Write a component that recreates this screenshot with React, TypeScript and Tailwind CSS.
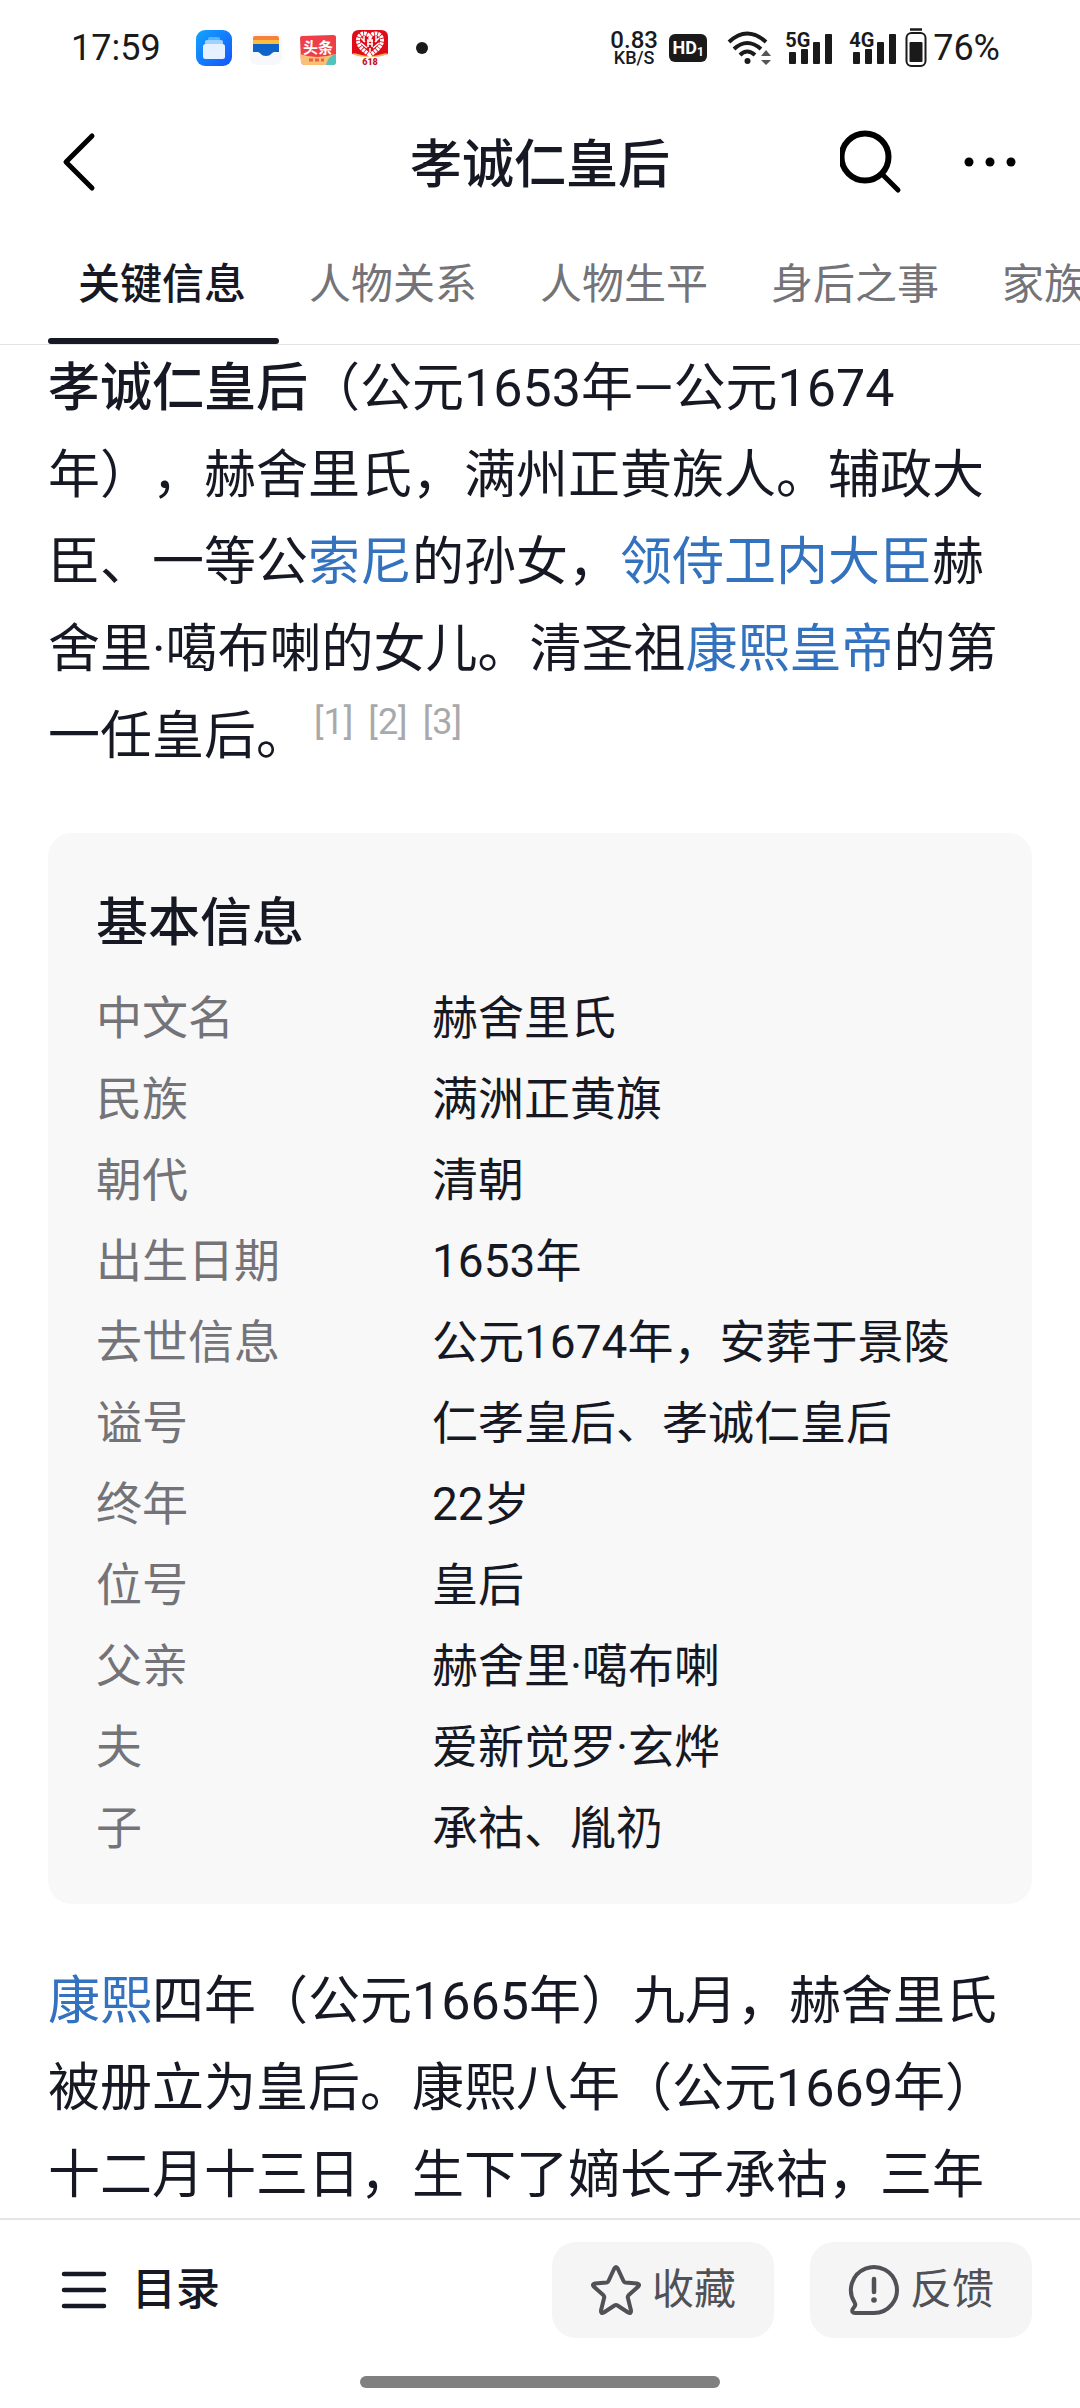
import { useState } from "react";

const tabs = ["关键信息", "人物关系", "人物生平", "身后之事", "家族成员"];

const info = [
  { label: "中文名", value: "赫舍里氏" },
  { label: "民族", value: "满洲正黄旗" },
  { label: "朝代", value: "清朝" },
  { label: "出生日期", value: "1653年" },
  { label: "去世信息", value: "公元1674年，安葬于景陵" },
  { label: "谥号", value: "仁孝皇后、孝诚仁皇后" },
  { label: "终年", value: "22岁" },
  { label: "位号", value: "皇后" },
  { label: "父亲", value: "赫舍里·噶布喇" },
  { label: "夫", value: "爱新觉罗·玄烨" },
  { label: "子", value: "承祜、胤礽" },
];

function WikiLink({ children }: { children: string }) {
  return (
    <a href="#" className="text-[#3372be]">
      {children}
    </a>
  );
}

function Signal({ label }: { label: string }) {
  return (
    <div className="relative h-9 w-12">
      <span className="absolute left-0 top-0 text-xl leading-5 font-bold">{label}</span>
      <svg viewBox="0 0 48 36" className="h-9 w-12" fill="currentColor">
        <rect x="4" y="22" width="7" height="12" rx="1" />
        <rect x="16" y="19" width="7" height="15" rx="1" />
        <rect x="28" y="12" width="7" height="22" rx="1" />
        <rect x="40" y="4" width="7" height="30" rx="1" />
      </svg>
    </div>
  );
}

function AppIcons() {
  return (
    <div className="flex items-center gap-4">
      <svg viewBox="0 0 36 36" className="size-9">
        <defs>
          <linearGradient id="files" x1="0" y1="0" x2="1" y2="1">
            <stop offset="0" stopColor="#12a4ff" />
            <stop offset="1" stopColor="#1554fb" />
          </linearGradient>
        </defs>
        <rect width="36" height="36" rx="9" fill="url(#files)" />
        <rect x="12" y="7" width="12" height="4" rx="1.5" fill="#55b4ff" />
        <rect x="9" y="10" width="18" height="5" rx="2" fill="#9fd2ff" />
        <rect x="7" y="14" width="22" height="15" rx="2.5" fill="#e6f1ff" />
      </svg>
      <svg viewBox="0 0 36 36" className="size-9">
        <rect x="2" y="3" width="32" height="32" rx="8" fill="#f6f8fc" />
        <path d="M5 8a2 2 0 0 1 2-2h22a2 2 0 0 1 2 2v3H5z" fill="#f5813c" />
        <path d="M5 10h26v5H5z" fill="#fbbf3f" />
        <path d="M5 14h26v8h-5c-2 0-3 4-8 4s-6-4-8-4H5z" fill="#0d63c8" />
      </svg>
      <svg viewBox="0 0 36 36" className="size-9">
        <path d="M0 8q0-2 2-2l31-1q3 0 3 2v24q0 4-4 4H5q-3 0-4-3z" fill="#ee3f49" />
        <path d="M0 24q16 6 36 0v8q0 3-3 3H5q-3 0-4-3z" fill="#fbc078" />
        <path d="M36 24v8q0 3-3 3h-7q2-9 10-11z" fill="#4fc4bd" />
        <text x="3" y="23" fontSize="15" fontWeight="700" fill="#fff">
          头条
        </text>
        <path d="M9 30h4M15 30h4M21 30h3" stroke="#e8623a" strokeWidth="3" />
      </svg>
      <svg viewBox="0 0 36 36" className="size-9">
        <path d="M0 7q0-7 7-7h22q7 0 7 7v17q-8 2-18 2T0 24z" fill="#e00b18" />
        <path d="M0 23q8 1 12 3h12q4-2 12-3l-5 3q-13 2-26 0z" fill="#f8b650" />
        <path
          d="M18 25C9 19 6 15 6 10c0-7 9-9 12-3 3-6 12-4 12 3 0 5-3 9-12 15z"
          fill="none"
          stroke="#fff"
          strokeWidth="4"
          strokeDasharray="2.500 .8"
        />
        <path
          d="M15 11h6M15 14h6M16 9v8M20 9v8M9 8l4 4M9 13l6 5M27 8l-4 4M27 13l-6 5M12 6v6M24 6v6M18 18v4"
          stroke="#fff"
          strokeWidth="1.500"
        />
        <text x="18" y="35" fontSize="9" fontWeight="900" textAnchor="middle" fill="#c8121c">
          618
        </text>
      </svg>
    </div>
  );
}

function StatusBar() {
  return (
    <div className="flex h-24 items-center justify-between pl-[71px] pr-20 text-[#1a1a1a]">
      <div className="flex items-center">
        <span className="w-[125px] text-4xl leading-9">17:59</span>
        <AppIcons />
        <span className="ml-7 size-3 rounded-full bg-current" />
      </div>
      <div className="flex items-center">
        <div className="flex w-[50px] flex-col items-center font-medium">
          <span className="text-2xl leading-5">0.83</span>
          <span className="text-lg leading-4">KB/S</span>
        </div>
        <span className="ml-2.5 flex h-7 w-[38px] items-end justify-center rounded-md bg-current">
          <span className="text-lg leading-7 font-bold text-white">HD</span>
          <span className="text-xs leading-5 font-bold text-white">1</span>
        </span>
        <svg viewBox="0 0 48 36" className="ml-5 h-9 w-12" fill="none" stroke="currentColor">
          <path d="M2 12Q20-5 39 12M7 19Q20 7 34 19M13 25Q20 18 28 25" strokeWidth="4" />
          <circle cx="20.5" cy="31" r="3" fill="currentColor" stroke="none" />
          <path d="M34 26l5-6 5 6zM34 30h10l-5 5z" fill="#555" stroke="none" />
        </svg>
        <div className="ml-2.5 flex gap-4">
          <Signal label="5G" />
          <Signal label="4G" />
        </div>
        <svg viewBox="0 0 22 40" className="ml-2 h-10 w-[22px]" fill="none" stroke="currentColor">
          <path d="M5 1.5h12" strokeWidth="2.5" />
          <rect x="1.5" y="5" width="19" height="33" rx="5" strokeWidth="2" />
          <rect x="4.5" y="14" width="13" height="20" rx="1" fill="currentColor" stroke="none" />
        </svg>
        <span className="ml-1.5 text-4xl leading-9">76%</span>
      </div>
    </div>
  );
}

function Header() {
  return (
    <header className="grid h-[132px] grid-cols-3 items-center px-[60px]">
      <button type="button" aria-label="返回" className="justify-self-start">
        <svg viewBox="0 0 40 60" className="h-[60px] w-10" fill="none" stroke="#000" strokeWidth="5" strokeLinecap="round" strokeLinejoin="round">
          <path d="M32 4L6 30l26 26" />
        </svg>
      </button>
      <h1 className="pt-2 text-center text-[52px] leading-[60px] font-medium whitespace-nowrap">孝诚仁皇后</h1>
      <div className="flex items-center justify-end gap-[60px]">
        <button type="button" aria-label="搜索">
          <svg viewBox="0 0 64 64" className="size-16" fill="none" stroke="#000" strokeLinecap="round">
            <circle cx="25" cy="27" r="23.500" strokeWidth="6" />
            <path d="M43 45l15 15" strokeWidth="5" />
          </svg>
        </button>
        <button type="button" aria-label="更多">
          <svg viewBox="0 0 56 56" className="size-14" fill="#000">
            <circle cx="5" cy="28" r="4.500" />
            <circle cx="26" cy="28" r="4.500" />
            <circle cx="47" cy="28" r="4.500" />
          </svg>
        </button>
      </div>
    </header>
  );
}

export default function App() {
  const [active, setActive] = useState(0);

  return (
    <div
      lang="zh-CN"
      className="flex min-h-screen flex-col overflow-x-hidden bg-white font-[Roboto,'Noto_Sans_CJK_SC',sans-serif] text-[#161823] [text-spacing-trim:space-all]"
    >
      <StatusBar />
      <Header />

      <nav className="flex overflow-hidden border-b border-[#e3e3e4] px-12">
        {tabs.map((tab, i) => (
          <button
            key={tab}
            type="button"
            onClick={() => setActive(i)}
            className={
              i === active
                ? "flex shrink-0 flex-col pt-1 text-[42px] leading-[106px] font-medium"
                : "flex shrink-0 flex-col pt-1 text-[42px] leading-[106px] text-[#737378]"
            }
          >
            <span className="pr-[33px] pl-[30px]">{tab}</span>
            <span className={i === active ? "h-1.5 w-full rounded-sm bg-[#161823]" : "h-1.5 w-full"} />
          </button>
        ))}
      </nav>

      <main className="flex-1 px-12 text-[52px] leading-[87px]">
        <p>
          <b className="font-medium">孝诚仁皇后</b>（公元1653年—公元1674年），赫舍里氏，满州正黄族人。辅政大臣、一等公
          <WikiLink>索尼</WikiLink>的孙女，<WikiLink>领侍卫内大臣</WikiLink>赫舍里·噶布喇的女儿。清圣祖
          <WikiLink>康熙皇帝</WikiLink>的第一任皇后。
          <span className="inline-flex gap-[15px] pl-1.5 align-[20px] text-4xl leading-9 text-[#a9a9ac]">
            <a href="#">[1]</a>
            <a href="#">[2]</a>
            <a href="#">[3]</a>
          </span>
        </p>

        <section className="mt-[53px] rounded-3xl bg-[#f8f8f8] px-12 pt-[51px] pb-[35px]">
          <h2 className="text-[52px] leading-[80px] font-medium">基本信息</h2>
          <table className="mt-3.5 w-full table-fixed text-[46px] leading-[81px]">
            <tbody>
              {info.map((row) => (
                <tr key={row.label}>
                  <th scope="row" className="w-[336px] p-0 text-left font-normal text-[#737378]">
                    {row.label}
                  </th>
                  <td className="p-0">{row.value}</td>
                </tr>
              ))}
            </tbody>
          </table>
        </section>

        <p className="mt-[54px]">
          <WikiLink>康熙</WikiLink>
          四年（公元1665年）九月，赫舍里氏被册立为皇后。康熙八年（公元1669年）十二月十三日，生下了嫡长子承祜，三年
        </p>
      </main>

      <footer className="-mt-0.5 border-t-2 border-[#e5e5e6] pt-[22px] pb-5">
        <div className="flex items-center gap-9 px-12">
          <button type="button" className="mr-auto flex items-center gap-6 pl-3 text-[44px] leading-[60px] font-medium">
            <svg viewBox="0 0 48 48" className="size-12" stroke="currentColor" strokeWidth="4.500" strokeLinecap="round">
              <path d="M4 8h40M4 24h40M4 40h40" />
            </svg>
            目录
          </button>
          <button
            type="button"
            className="flex h-24 w-[222px] items-center justify-center gap-2.5 rounded-3xl bg-[#f5f5f5] text-[42px] leading-[60px] text-[#505157]"
          >
            <svg viewBox="0 0 52 52" className="size-[52px]" fill="none" stroke="currentColor" strokeWidth="4" strokeLinejoin="round">
              <path d="M24.300 4.500Q26 1.500 27.700 4.500L33.500 17Q34 18.200 35.300 18.400L47 19.500Q50.500 20.200 48 22.800L38.500 31.300Q37.500 32.300 37.800 33.500L41 46.500Q41.300 50 38.200 48.500L27.500 41.500Q26 40.600 24.500 41.500L13.800 48.500Q10.700 50 11 46.500L14.200 33.500Q14.500 32.300 13.500 31.300L4 22.800Q1.500 20.200 5 19.500L16.700 18.400Q18 18.200 18.500 17z" />
            </svg>
            收藏
          </button>
          <button
            type="button"
            className="flex h-24 w-[222px] items-center justify-center gap-2.5 rounded-3xl bg-[#f5f5f5] text-[42px] leading-[60px] text-[#505157]"
          >
            <svg viewBox="0 0 52 52" className="size-[52px]" fill="none" stroke="currentColor" strokeLinecap="round" strokeLinejoin="round">
              <path d="M26 49A23 23 0 1 0 6.500 38.300Q8 40.500 6.500 42.500L4.500 45.500Q3.500 49 7 49z" strokeWidth="4" />
              <path d="M26 15v13" strokeWidth="4.500" />
              <circle cx="26" cy="36" r="2.800" fill="currentColor" stroke="none" />
            </svg>
            反馈
          </button>
        </div>
        <div className="mx-auto mt-[38px] h-3 w-1/3 rounded-full bg-[#808080]" />
      </footer>
    </div>
  );
}
